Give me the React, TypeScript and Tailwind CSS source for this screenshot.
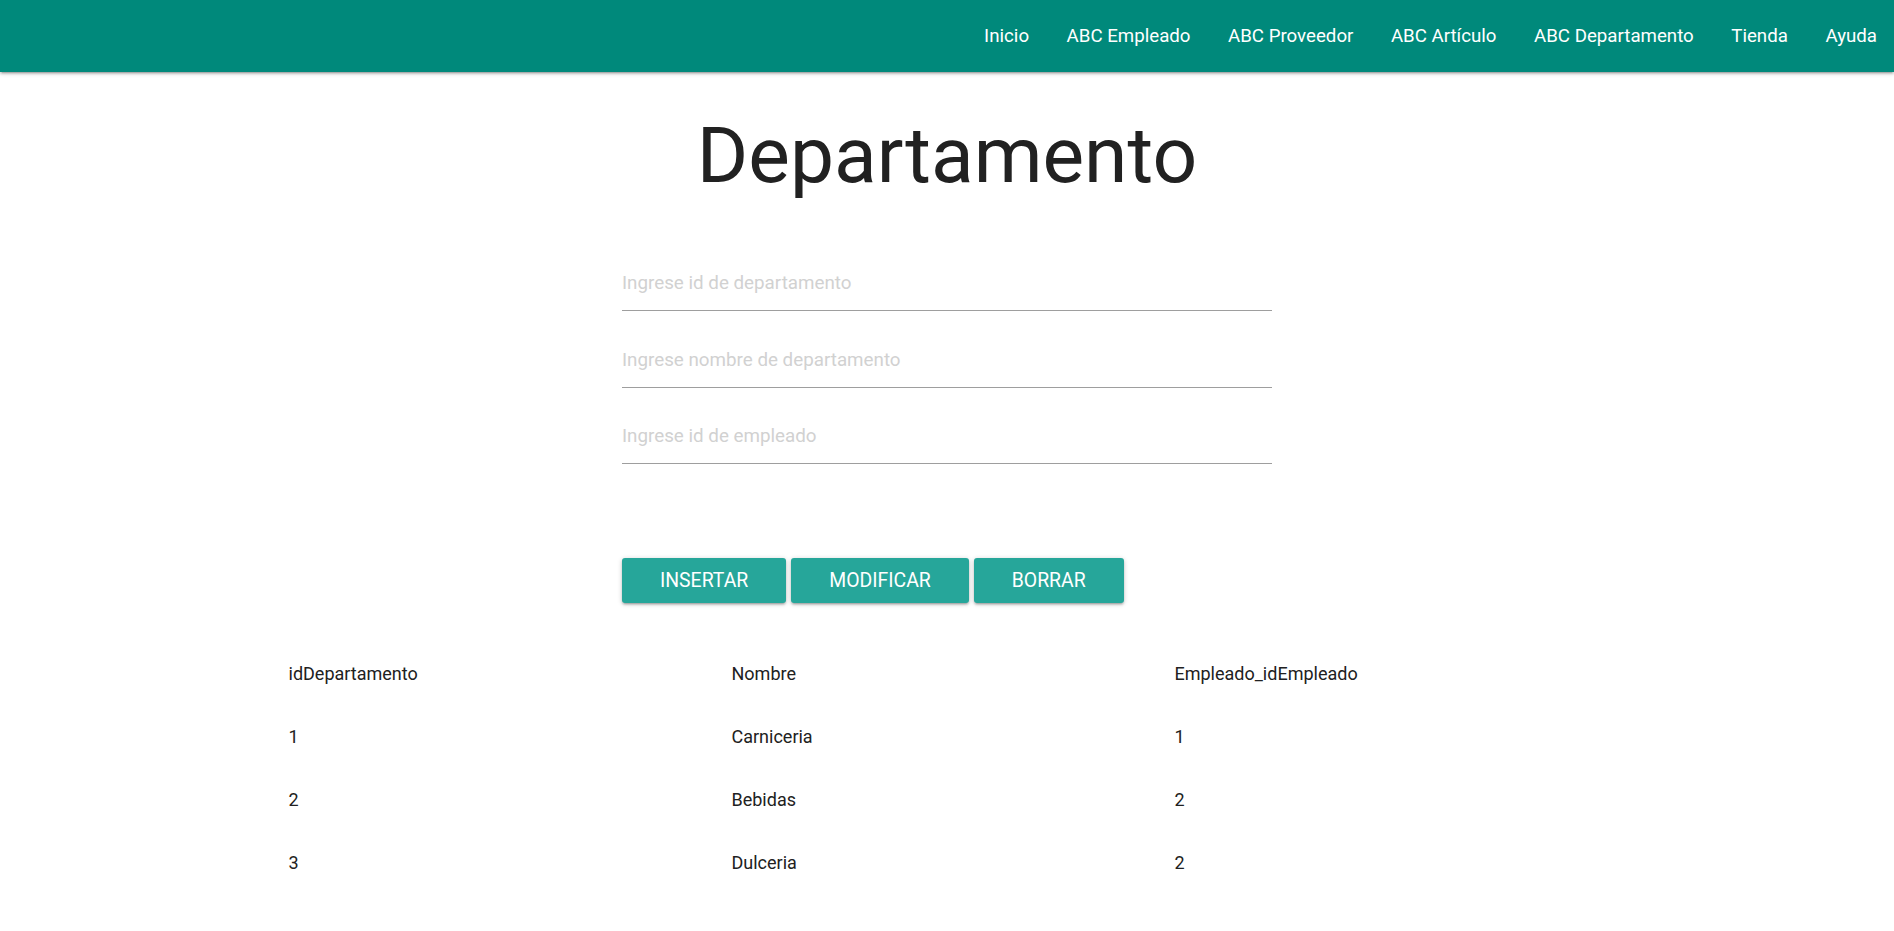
import React from 'react'

const navItems = ['Inicio', 'ABC Empleado', 'ABC Proveedor', 'ABC Artículo', 'ABC Departamento', 'Tienda', 'Ayuda']

const fields = ['Ingrese id de departamento', 'Ingrese nombre de departamento', 'Ingrese id de empleado']

const rows = [
  { id: '1', nombre: 'Carniceria', emp: '1' },
  { id: '2', nombre: 'Bebidas', emp: '2' },
  { id: '3', nombre: 'Dulceria', emp: '2' },
]

const App: React.FC = () => {
  return (
    <div className="min-h-screen bg-white font-['Roboto','Liberation_Sans',sans-serif] text-[#212121]">
      {/* Navbar */}
      <nav className="h-[72px] bg-[#00897b] flex items-center justify-end pr-[17px] shadow-[0_2px_2px_0_rgba(0,0,0,0.14),0_3px_1px_-2px_rgba(0,0,0,0.12),0_1px_5px_0_rgba(0,0,0,0.2)]">
        <ul className="flex items-center gap-[37.5px] text-white text-[18.7px]">
          {navItems.map((item) => (
            <li key={item}>
              <a href="#" className="leading-[72px]">{item}</a>
            </li>
          ))}
        </ul>
      </nav>

      <h1 className="mt-[41px] text-center text-[78.5px] leading-[84px] font-normal">Departamento</h1>

      {/* Form */}
      <div className="w-[650px] mx-auto mt-[59px] flex flex-col gap-[21.5px]">
        {fields.map((f) => (
          <input
            key={f}
            type="text"
            placeholder={f}
            className="h-[55px] w-full border-b border-[#9e9e9e] text-[18.8px] outline-none bg-transparent placeholder:text-[#d1d1d1]"
          />
        ))}
      </div>

      <div className="w-[650px] mx-auto mt-[94px] flex gap-[5px]">
        {['Insertar', 'Modificar', 'Borrar'].map((b) => (
          <button
            key={b}
            className="h-[45px] px-[38px] rounded-[3px] bg-[#26a69a] text-white text-[19.4px] uppercase shadow-[0_2px_2px_0_rgba(0,0,0,0.14),0_3px_1px_-2px_rgba(0,0,0,0.12),0_1px_5px_0_rgba(0,0,0,0.2)]"
          >
            {b}
          </button>
        ))}
      </div>

      {/* Table */}
      <table className="w-[1329px] mx-auto mt-[39px] table-fixed text-[18px] text-left">
        <thead>
          <tr>
            <th className="w-[443px] px-[6px] py-[18px] leading-[27px] font-normal">idDepartamento</th>
            <th className="w-[443px] px-[6px] py-[18px] leading-[27px] font-normal">Nombre</th>
            <th className="w-[443px] px-[6px] py-[18px] leading-[27px] font-normal">Empleado_idEmpleado</th>
          </tr>
        </thead>
        <tbody>
          {rows.map((r) => (
            <tr key={r.id}>
              <td className="px-[6px] py-[18px] leading-[27px]">{r.id}</td>
              <td className="px-[6px] py-[18px] leading-[27px]">{r.nombre}</td>
              <td className="px-[6px] py-[18px] leading-[27px]">{r.emp}</td>
            </tr>
          ))}
        </tbody>
      </table>
    </div>
  )
}

export default App
